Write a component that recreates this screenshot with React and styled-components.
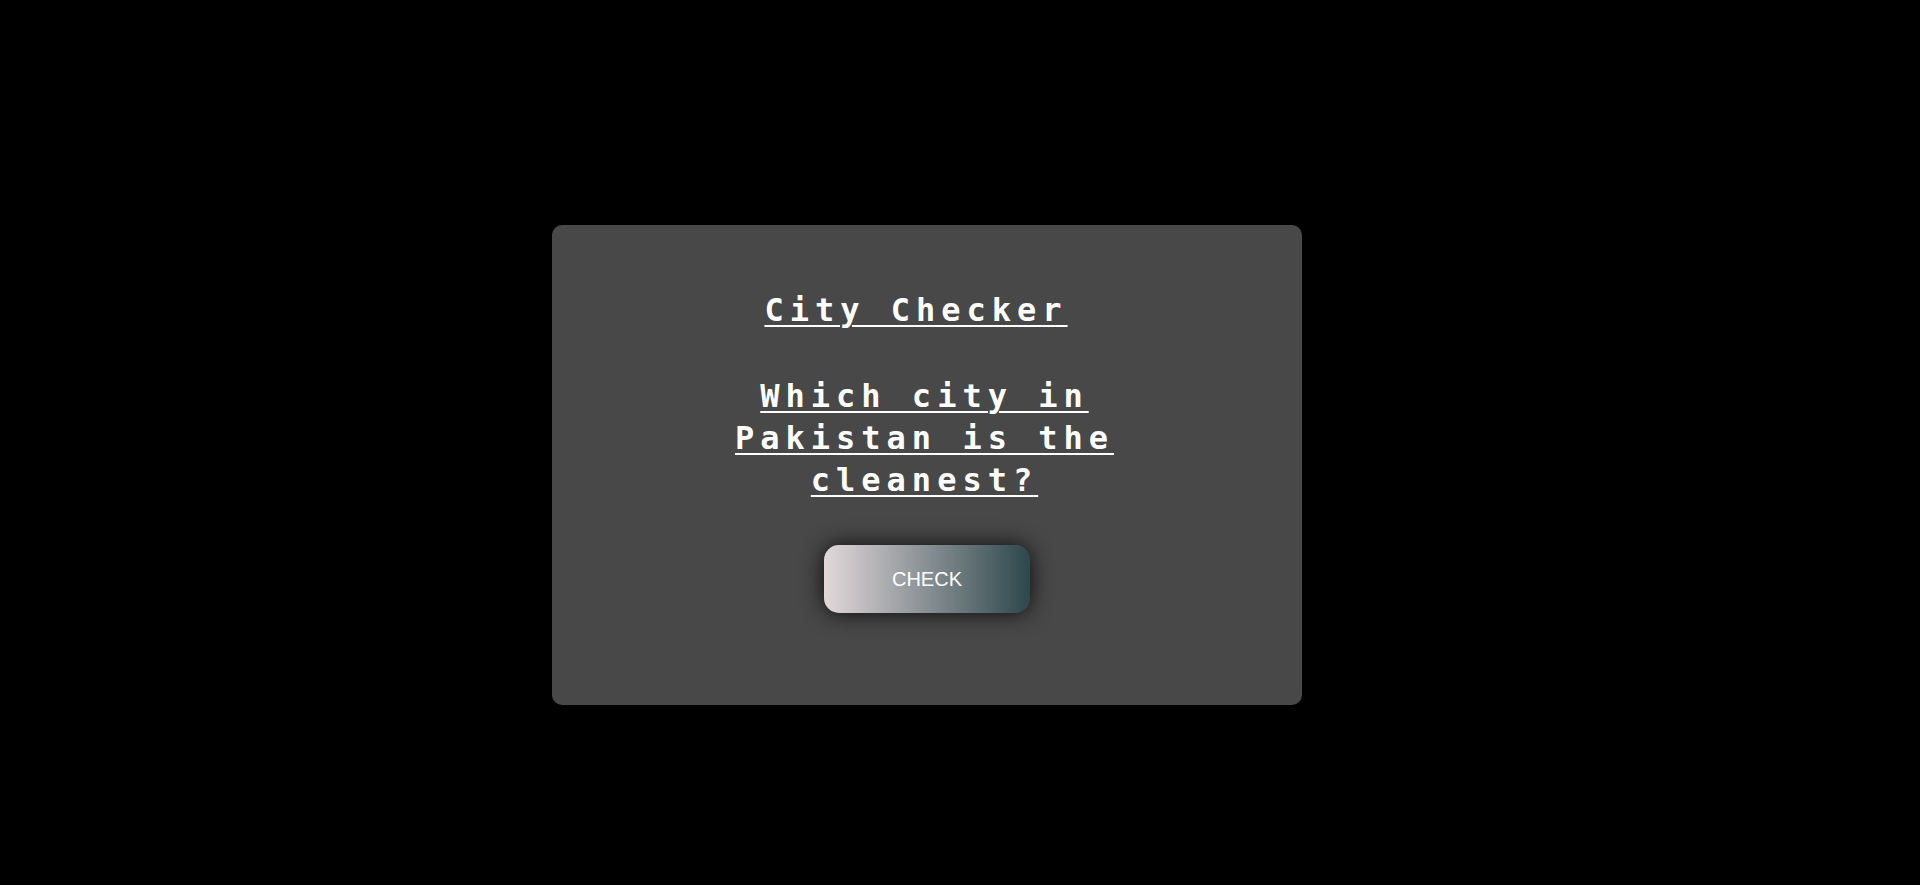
import React from 'react';
import styled, { createGlobalStyle } from 'styled-components';

const GlobalStyle = createGlobalStyle`
  html, body {
    margin: 0;
    padding: 0;
    background: #000;
  }
`;

export default function App() {
  return (
    <>
      <GlobalStyle />
      <Page>
        <Card>
          <Title>City Checker</Title>
          <Question>Which city in Pakistan is the cleanest?</Question>
          <CheckButton type='button'>CHECK</CheckButton>
        </Card>
      </Page>
    </>
  );
}

const Page = styled.div`
  min-height: 100vh;
  box-sizing: border-box;
  display: flex;
  justify-content: center;
  align-items: flex-start;
  padding: 225px 66px 0 0;
  background: #000;
`;

const Card = styled.div`
  width: 750px;
  height: 480px;
  box-sizing: border-box;
  padding-top: 64px;
  display: flex;
  flex-direction: column;
  align-items: center;
  background: #484848;
  border-radius: 10px;
`;

const Heading = styled.h1`
  margin: 0;
  color: #fff;
  font-family: 'DejaVu Sans Mono', monospace;
  font-weight: bold;
  font-size: 32px;
  line-height: 42px;
  letter-spacing: 6px;
  text-decoration: underline;
  text-decoration-thickness: 2px;
  text-underline-offset: 4px;
  text-align: center;
`;

const Title = styled(Heading)`
  margin-left: -22px;
`;

const Question = styled(Heading)`
  width: 420px;
  margin: 44px 0 0 -5px;
`;

const CheckButton = styled.button`
  margin-top: 44px;
  width: 206px;
  height: 68px;
  border: none;
  border-radius: 15px;
  background: linear-gradient(to right, #e2d8da, #2d474c);
  color: #fff;
  font-family: 'Liberation Sans', Arial, sans-serif;
  font-size: 20px;
  cursor: pointer;
  box-shadow: 0 0 22px rgba(0, 0, 0, 0.85);
`;
